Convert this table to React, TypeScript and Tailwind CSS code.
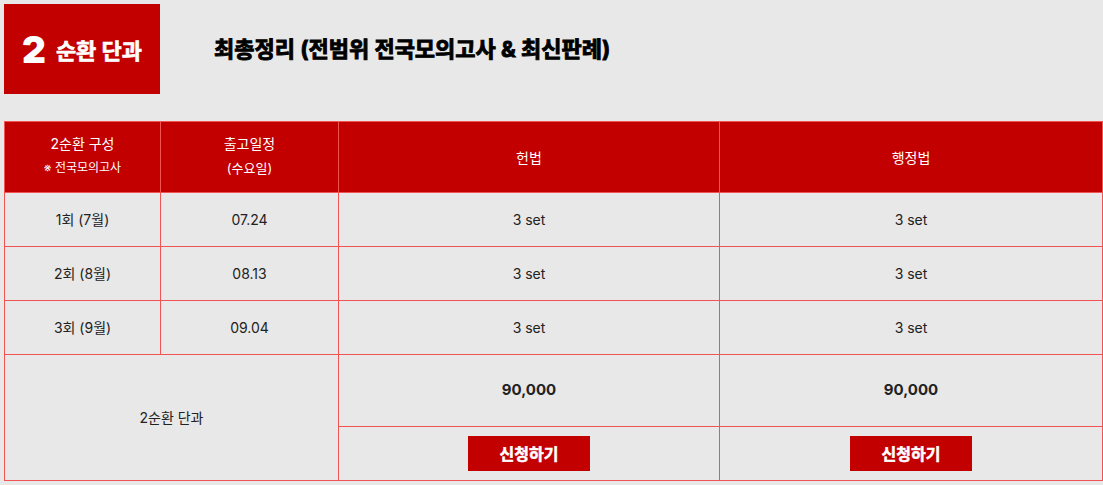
import React from "react";

const font = { fontFamily: 'Inter, "Noto Sans CJK KR", "Noto Sans", sans-serif' };

export default function App() {
  const rows = [
    ["1회 (7월)", "07.24"],
    ["2회 (8월)", "08.13"],
    ["3회 (9월)", "09.04"],
  ];
  const td = "border border-[#f25454] text-center align-middle text-[14px] text-[#222]";
  const th = "border border-[#f25454] text-center align-middle text-[14px] text-white font-normal";
  return (
    <div className="w-[1103px] h-[485px] bg-[#e8e8e8] overflow-hidden" style={font}>
      <div className="flex items-center pt-1">
        <div className="ml-1 w-[156px] h-[90px] bg-[#c20000] flex items-center justify-center gap-[10px] text-white">
          <span className="text-[37px] font-black leading-none">2</span>
          <span className="text-[22px] font-bold leading-none mt-[3px] [-webkit-text-stroke:0.6px_#fff]">순환 단과</span>
        </div>
        <div className="ml-[54px] text-[22px] font-bold text-black [-webkit-text-stroke:0.9px_#000]">
          최총정리 (전범위 전국모의고사 &amp; 최신판례)
        </div>
      </div>
      <table className="ml-1 mt-[27px] w-[1098px] border-collapse table-fixed">
        <colgroup>
          <col className="w-[156px]" />
          <col className="w-[178px]" />
          <col className="w-[381px]" />
          <col className="w-[383px]" />
        </colgroup>
        <thead>
          <tr className="h-[71px] bg-[#c20000]">
            <th className={th}>
              <div className="leading-[24px] -mt-[2px]">2순환 구성</div>
              <div className="leading-[24px] text-[12px]">※ 전국모의고사</div>
            </th>
            <th className={th}>
              <div className="leading-[24px] -mt-[2px]">출고일정</div>
              <div className="leading-[24px] text-[13px]">(수요일)</div>
            </th>
            <th className={th}>헌법</th>
            <th className={th}>행정법</th>
          </tr>
        </thead>
        <tbody>
          {rows.map((r) => (
            <tr key={r[0]} className="h-[54px]">
              <td className={td}>{r[0]}</td>
              <td className={td}>{r[1]}</td>
              <td className={td}>3 set</td>
              <td className={td}>3 set</td>
            </tr>
          ))}
          <tr className="h-[72px]">
            <td className={td} colSpan={2} rowSpan={2}>
              2순환 단과
            </td>
            <td className={td + " font-bold text-[15px]"}>90,000</td>
            <td className={td + " font-bold text-[15px]"}>90,000</td>
          </tr>
          <tr className="h-[54px]">
            {[0, 1].map((i) => (
              <td key={i} className={td}>
                <button className="w-[122px] h-[35px] bg-[#c20000] text-white font-bold text-[16px] inline-flex items-center justify-center [-webkit-text-stroke:0.5px_#fff]">
                  신청하기
                </button>
              </td>
            ))}
          </tr>
        </tbody>
      </table>
    </div>
  );
}
